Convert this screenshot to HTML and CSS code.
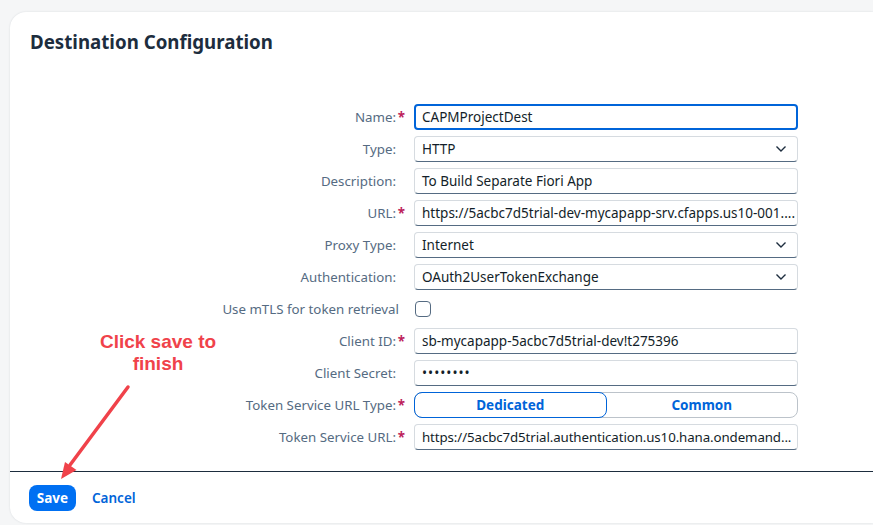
FILE: index.html
```html
<!DOCTYPE html>
<html lang="en">
<head>
<meta charset="utf-8">
<title>Destination Configuration</title>
<link rel="stylesheet" href="styles.css">
</head>
<body>
<div class="card">
  <div class="card-header"><h1 class="title">Destination Configuration</h1></div>
  <div class="form">
    <label class="lbl">Name:<span class="req">*</span></label>
    <div class="field focus">CAPMProjectDest</div>

    <label class="lbl">Type:<span class="req-pad"></span></label>
    <div class="field select">HTTP<svg class="chev" viewBox="0 0 12 8"><path d="M1.5 1.5 L6 6 L10.5 1.5"/></svg></div>

    <label class="lbl">Description:<span class="req-pad"></span></label>
    <div class="field">To Build Separate Fiori App</div>

    <label class="lbl">URL:<span class="req">*</span></label>
    <div class="field">https://5acbc7d5trial-dev-mycapapp-srv.cfapps.us10-001....</div>

    <label class="lbl">Proxy Type:<span class="req-pad"></span></label>
    <div class="field select">Internet<svg class="chev" viewBox="0 0 12 8"><path d="M1.5 1.5 L6 6 L10.5 1.5"/></svg></div>

    <label class="lbl">Authentication:<span class="req-pad"></span></label>
    <div class="field select">OAuth2UserTokenExchange<svg class="chev" viewBox="0 0 12 8"><path d="M1.5 1.5 L6 6 L10.5 1.5"/></svg></div>

    <label class="lbl lbl-cb">Use mTLS for token retrieval</label>
    <div class="cb-cell"><span class="checkbox"></span></div>

    <label class="lbl">Client ID:<span class="req">*</span></label>
    <div class="field">sb-mycapapp-5acbc7d5trial-dev!t275396</div>

    <label class="lbl">Client Secret:<span class="req-pad"></span></label>
    <div class="field secret">••••••••</div>

    <label class="lbl">Token Service URL Type:<span class="req">*</span></label>
    <div class="segmented">
      <span class="seg seg-on">Dedicated</span>
      <span class="seg">Common</span>
    </div>

    <label class="lbl">Token Service URL:<span class="req">*</span></label>
    <div class="field tight">https://5acbc7d5trial.authentication.us10.hana.ondemand...</div>
  </div>
  <div class="footer">
    <button class="btn-save">Save</button>
    <button class="btn-cancel">Cancel</button>
  </div>

  <div class="note">Click save to<br>finish</div>
  <svg class="arrow" viewBox="0 0 200 500" width="200" height="500">
    <line x1="118" y1="375" x2="60" y2="453" />
    <polygon points="51,467 66.5,458 55,450" />
  </svg>
</div>
</body>
</html>
```
FILE: styles.css
```css
html, body {
  margin: 0;
  padding: 0;
}
body {
  background: #f5f6f7;
  font-family: "Noto Sans", Inter, "Liberation Sans", sans-serif;
  height: 525px;
  overflow: hidden;
}
.card {
  position: relative;
  margin: 12px 0 0 10px;
  height: 511px;
  background: #ffffff;
  border-radius: 16px 0 0 16px;
  box-shadow: 0 0 2px rgba(34, 53, 72, 0.15);
  display: flex;
  flex-direction: column;
}
.card-header {
  padding: 17px 20px 0 20px;
}
.title {
  margin: 0;
  font-size: 18.7px;
  line-height: 26px;
  font-weight: 700;
  color: #1d2d3e;
}
.form {
  margin-top: 49px;
  display: grid;
  grid-template-columns: 395px 384px;
  grid-auto-rows: 26px;
  row-gap: 6px;
  column-gap: 9px;
  flex: 1;
  align-content: start;
}
.lbl {
  align-self: center;
  text-align: right;
  font-size: 13.3px;
  color: #556b82;
  white-space: nowrap;
}
.lbl-cb {
  padding-right: 6px;
}
.req {
  color: #bd1f5c;
  display: inline-block;
  width: 9px;
  text-align: right;
  font-weight: 700;
}
.req-pad {
  display: inline-block;
  width: 9px;
}
.field {
  box-sizing: border-box;
  height: 26px;
  border: 1px solid #d6dbe0;
  border-bottom-color: #556b82;
  border-radius: 4px;
  padding: 0 7px;
  display: flex;
  align-items: center;
  font-size: 13.5px;
  color: #131e29;
  white-space: nowrap;
  overflow: hidden;
}
.field.tight {
  letter-spacing: -0.1px;
  font-size: 13.3px;
}
.field.focus {
  border: 2px solid #0064d9;
  padding: 0 6px;
}
.field.select {
  justify-content: space-between;
}
.chev {
  width: 12px;
  height: 8px;
  margin-right: 3px;
  flex: none;
  fill: none;
  stroke: #1d2d3e;
  stroke-width: 1.4;
}
.field.secret {
  font-size: 13.5px;
  letter-spacing: 1px;
}
.cb-cell {
  display: flex;
  align-items: center;
  padding-left: 1px;
}
.checkbox {
  box-sizing: border-box;
  width: 16px;
  height: 16px;
  border: 1.5px solid #556b82;
  border-radius: 4px;
}
.segmented {
  box-sizing: border-box;
  height: 26px;
  border: 1px solid #bcc3ca;
  border-radius: 8px;
  display: flex;
}
.seg {
  flex: 1;
  display: flex;
  align-items: center;
  justify-content: center;
  font-size: 13.5px;
  font-weight: 700;
  color: #0064d9;
  border-radius: 8px;
}
.seg-on {
  margin: -1px 0 -1px -1px;
  border: 1px solid #0064d9;
}
.footer {
  box-sizing: border-box;
  height: 52px;
  border-top: 1px solid #1d2d3e;
  padding: 0 0 0 19px;
  display: flex;
  align-items: center;
  gap: 16px;
}
.btn-save {
  height: 26px;
  width: 47px;
  border: none;
  border-radius: 8px;
  background: #0070f2;
  color: #ffffff;
  font-family: inherit;
  font-size: 13.5px;
  font-weight: 700;
  padding: 0;
}
.btn-cancel {
  border: none;
  background: none;
  padding: 0;
  color: #0064d9;
  font-family: inherit;
  font-size: 13.5px;
  font-weight: 600;
}
.note {
  position: absolute;
  left: 76px;
  top: 319px;
  width: 144px;
  text-align: center;
  font-family: "Liberation Sans", Arial, sans-serif;
  font-weight: 700;
  font-size: 19px;
  line-height: 22px;
  color: #f0424a;
}
.arrow {
  position: absolute;
  left: 0;
  top: 0;
  overflow: visible;
}
.arrow line {
  stroke: #f0424a;
  stroke-width: 3.5;
  stroke-linecap: round;
}
.arrow polygon {
  fill: #f0424a;
}
```
